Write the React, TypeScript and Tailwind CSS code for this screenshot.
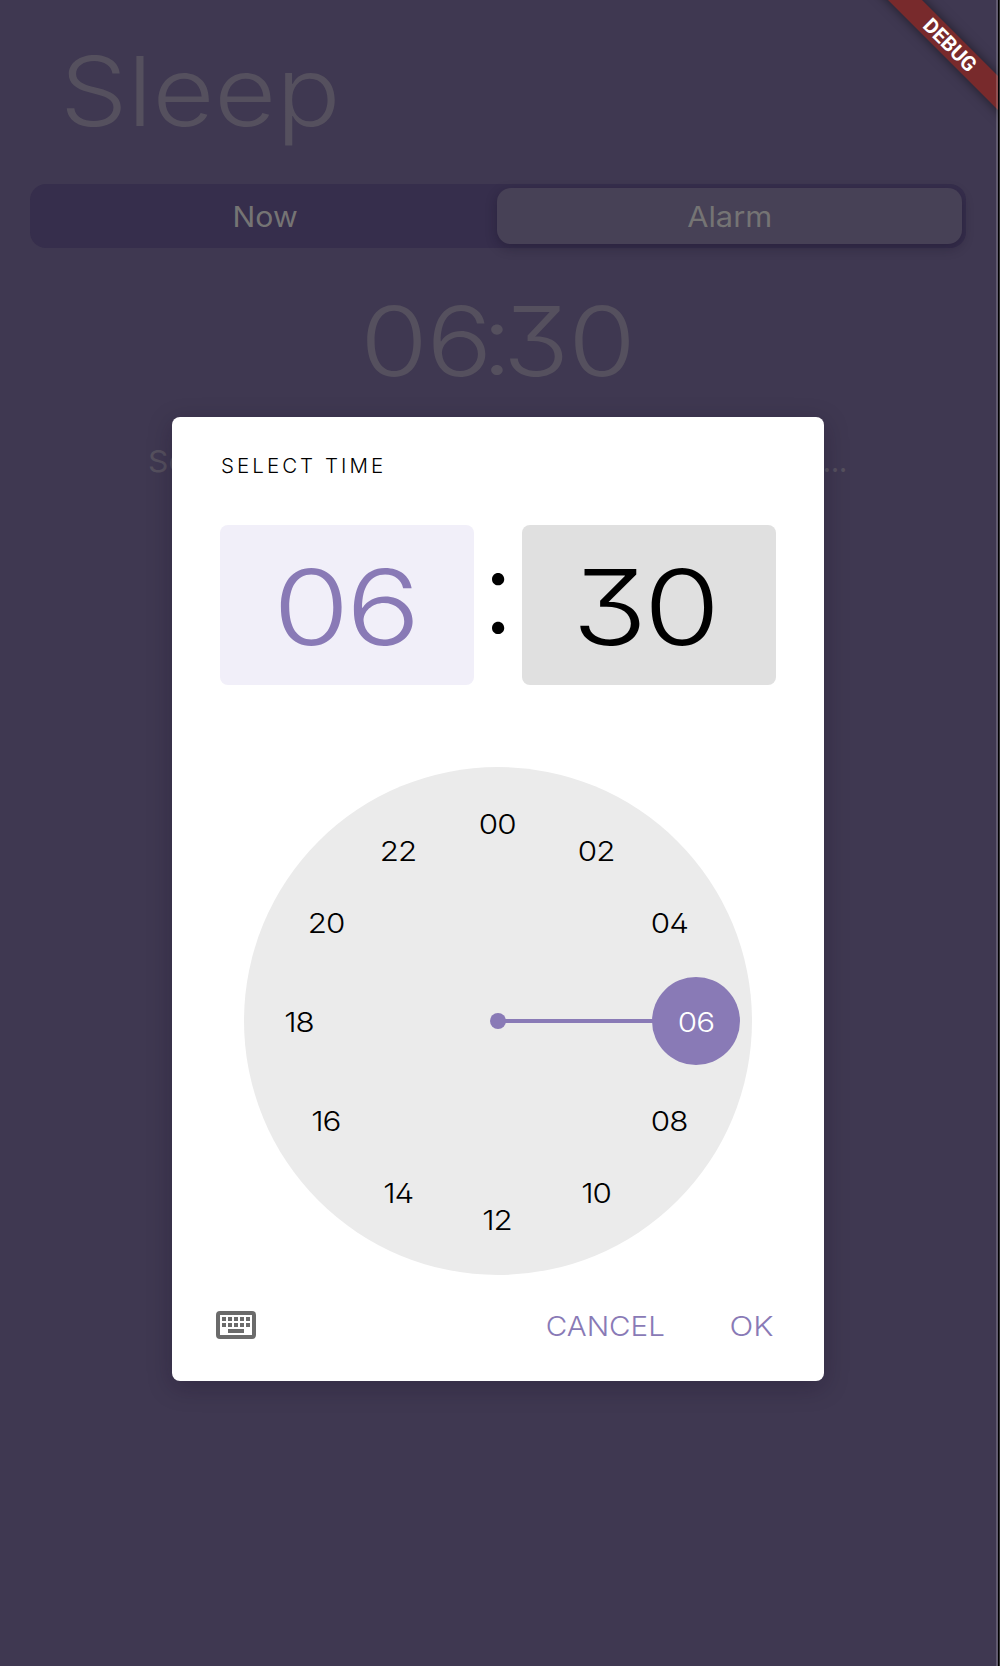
import React from "react";

const hours = ["00", "02", "04", "06", "08", "10", "12", "14", "16", "18", "20", "22"];

function ClockFace() {
  return (
    <div className="relative mx-auto mt-[82px] size-[508px] shrink-0 rounded-full bg-[#ebebeb]">
      <div className="absolute left-[254px] top-[252px] h-1 w-[198px] bg-[#897ab6]" />
      <div className="absolute left-[246px] top-[246px] size-4 rounded-full bg-[#897ab6]" />
      <div className="absolute left-[408px] top-[210px] size-[88px] rounded-full bg-[#897ab6]" />
      {hours.map((h, i) => {
        const a = (i * Math.PI) / 6;
        return (
          <div
            key={h}
            className={
              "absolute flex h-8 w-12 items-center justify-center text-[27.5px] font-[350] leading-8 " +
              (h === "06" ? "text-white" : "text-black")
            }
            style={{ left: 254 + 198 * Math.sin(a) - 24, top: 255 - 198 * Math.cos(a) - 16 }}
          >
            <span className="mr-px inline-block scale-x-[1.14] tracking-[-0.8px]">{h}</span>
          </div>
        );
      })}
    </div>
  );
}

function KeyboardIcon() {
  return (
    <svg width="40" height="28" viewBox="0 0 40 28" fill="#6b6b6b">
      <rect x="2" y="2" width="36" height="24" rx="2" fill="none" stroke="#6b6b6b" strokeWidth="4" />
      {[6, 12, 18, 24, 30].map((x) => (
        <React.Fragment key={x}>
          <rect x={x} y="6" width="4" height="4" />
          <rect x={x} y="12" width="4" height="4" />
        </React.Fragment>
      ))}
      <rect x="12" y="18" width="16" height="4" />
    </svg>
  );
}

function TimeDialog() {
  return (
    <div className="absolute left-[172px] top-[417px] flex h-[964px] w-[652px] flex-col rounded-lg bg-white px-12 shadow-[0_6px_24px_rgba(20,12,35,0.28)]">
      <div className="mt-[33px] h-8 pl-[1px] text-[20.5px] font-light leading-8 tracking-[3.05px] text-black">
        SELECT TIME
      </div>
      <div className="mt-[43px] flex h-40 shrink-0 items-center text-[105px] leading-none">
        <div className="flex h-40 w-[254px] items-center justify-center rounded-lg bg-[#f1eff9] pt-[3px] font-[330] text-[#897ab6]">
          <span className="mr-[4px] inline-block scale-x-[1.18] tracking-[-3px]">06</span>
        </div>
        <div className="flex w-12 justify-center pb-[28px] text-[116px] font-[340] text-black">:</div>
        <div className="flex h-40 w-[254px] items-center justify-center rounded-lg bg-[#e0e0e0] pt-[3px] font-[330] text-black">
          <span className="mr-[9px] inline-block scale-x-[1.18] tracking-[-3px]">30</span>
        </div>
      </div>
      <ClockFace />
      <div className="-mx-1 mt-9 flex h-7 items-center text-[27.5px] font-light leading-7 text-[#897ab6]">
        <KeyboardIcon />
        <span className="ml-auto mr-[70px] origin-right scale-x-[1.075] pt-px">CANCEL</span>
        <span className="mr-[6px] origin-right scale-x-[1.14] pt-px">OK</span>
      </div>
    </div>
  );
}

export default function App() {
  return (
    <div className="relative flex h-[1666px] w-[1000px] overflow-hidden bg-[#333] font-['Inter',sans-serif] [font-feature-settings:'cv09','cv02']">
      <div className="relative h-full w-[998px] overflow-hidden bg-[#3f3851]">
        <div className="flex h-[184px] items-start pl-[60px] pt-[31px]">
          <h1 className="origin-left scale-x-[1.107] text-[96.5px] font-[340] leading-[120px] text-[#55505e]">Sleep</h1>
        </div>
        <div className="ml-[30px] flex h-16 w-[936px] rounded-2xl bg-[#362e4c] p-1 text-[28px] leading-[58px] text-[#757474]">
          <div className="flex-1 text-center">
            <span className="inline-block scale-x-[1.08]">Now</span>
          </div>
          <div className="h-14 w-[465px] rounded-[14px] bg-[#474156] text-center shadow-[0_4px_12px_rgba(20,12,35,0.32)]">
            <span className="inline-block scale-x-[1.1]">Alarm</span>
          </div>
        </div>
        <div className="mt-[33px] h-[120px] w-[995px] text-center text-[96px] font-[340] leading-[120px] text-[#55505e]">
          <span className="inline-block scale-x-[1.14] tracking-[-1px]">
            0<span className="tracking-[-9.5px]">6</span>
            <span className="relative top-[-2px] tracking-[-8.5px]">:</span>30
          </span>
        </div>
        <div className="ml-[148px] mt-10 flex w-[699px] justify-between text-[30px] leading-10 text-[#55505e]">
          <span className="origin-left scale-x-[1.06]">Se</span>
          <span className="tracking-[-0.5px]">....</span>
        </div>
        <div className="absolute left-[804px] top-[33px] flex h-6 w-[292px] rotate-45 items-center justify-center bg-[#782a2c] font-['Roboto'] text-[20.6px] font-bold text-white shadow-[0_0_12px_rgba(0,0,0,0.5)]">
          DEBUG
        </div>
        <div className="absolute right-0 top-0 h-full w-0.5 bg-white/18" />
      </div>
      <div className="h-full w-px bg-black" />
      <TimeDialog />
    </div>
  );
}
